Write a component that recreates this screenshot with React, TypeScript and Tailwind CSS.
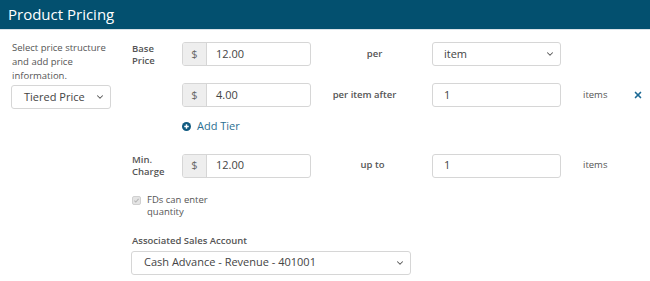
import { ChevronDown, X } from "lucide-react";

const font = { fontFamily: '"Open Sans", "Liberation Sans", sans-serif' };

function MoneyInput({ value }: { value: string }) {
  return (
    <div className="flex h-[24px] w-[129px] rounded-[3px] border border-[#d6d6d6] overflow-hidden">
      <div className="flex w-[24px] items-center justify-center border-r border-[#d6d6d6] bg-[#eeeeee] text-[11px] text-[#666]">
        $
      </div>
      <div className="flex flex-1 items-center pl-[9px] text-[11px] text-[#444]">{value}</div>
    </div>
  );
}

function TextBox({ value }: { value: string }) {
  return (
    <div className="flex h-[24px] w-[129px] items-center rounded-[3px] border border-[#d6d6d6] pl-[11px] text-[11px] text-[#444]">
      {value}
    </div>
  );
}

function SelectBox({ value, width, pad }: { value: string; width: string; pad: string }) {
  return (
    <div
      className={`flex h-[24px] items-center justify-between rounded-[3px] border border-[#d6d6d6] pr-[5px] text-[11px] text-[#444] ${width} ${pad}`}
    >
      <span>{value}</span>
      <ChevronDown className="h-[10px] w-[10px] text-[#555]" strokeWidth={2.5} />
    </div>
  );
}

export default function App() {
  return (
    <div className="h-[281px] w-[650px] bg-white" style={font}>
      {/* Header */}
      <div className="flex h-[30px] items-center border-b border-[#d9e3e8] bg-[#03506f] pl-[8px] text-[15px] text-white">
        Product Pricing
      </div>

      <div className="flex">
        {/* Left column */}
        <div className="w-[132px] pl-[11px] pt-[11px]">
          <p className="w-[100px] pl-[1px] text-[9.5px] leading-[14px] text-[#555]">
            Select price structure and add price information.
          </p>
          <div className="mt-[2px]">
            <SelectBox value="Tiered Price" width="w-[100px]" pad="pl-[12px]" />
          </div>
        </div>

        {/* Main form */}
        <div className="flex flex-col pt-[12px]">
          {/* Base price */}
          <div className="flex h-[24px] items-center">
            <div className="w-[50px] self-start pt-[1px] text-[9.5px] font-semibold leading-[12px] text-[#555]">
              Base
              <br />
              Price
            </div>
            <MoneyInput value="12.00" />
            <div className="w-[121px] pl-[6px] text-center text-[9.5px] font-semibold text-[#555]">per</div>
            <SelectBox value="item" width="w-[129px]" pad="pl-[11px]" />
          </div>

          {/* Tier row */}
          <div className="mt-[17px] flex h-[24px] items-center">
            <div className="w-[50px]" />
            <MoneyInput value="4.00" />
            <div className="w-[121px] pr-[14px] text-center text-[9.5px] font-semibold text-[#555]">per item after</div>
            <TextBox value="1" />
            <div className="w-[72px] pl-[22px] text-[9.5px] text-[#555]">items</div>
            <X className="h-[10px] w-[10px] text-[#1d6a95]" strokeWidth={4} />
          </div>

          {/* Add tier */}
          <div className="mt-[11px] flex items-center gap-[6px] pl-[50px]">
            <svg viewBox="0 0 16 16" className="h-[9px] w-[9px]">
              <circle cx="8" cy="8" r="8" fill="#0f5a80" />
              <path d="M8 4v8M4 8h8" stroke="white" strokeWidth="2.6" />
            </svg>
            <span className="text-[11px] text-[#2c6f92]">Add Tier</span>
          </div>

          {/* Min charge */}
          <div className="mt-[19px] flex h-[24px] items-center">
            <div className="w-[50px] text-[9.5px] font-semibold leading-[12px] text-[#555]">
              Min.
              <br />
              Charge
            </div>
            <MoneyInput value="12.00" />
            <div className="w-[121px] pl-[2px] text-center text-[9.5px] font-semibold text-[#555]">up to</div>
            <TextBox value="1" />
            <div className="pl-[22px] text-[9.5px] text-[#555]">items</div>
          </div>

          {/* Checkbox */}
          <div className="mt-[16px] flex items-start gap-[6px]">
            <div className="mt-[2px] flex h-[9px] w-[9px] items-center justify-center rounded-[2px] border border-[#d0d0d0] bg-[#e4e4e4]">
              <svg viewBox="0 0 10 10" className="h-[7px] w-[7px]">
                <path d="M2 5.2l2 2 4-4.5" fill="none" stroke="#b5b5b5" strokeWidth="1.5" />
              </svg>
            </div>
            <div className="w-[70px] text-[9.5px] leading-[12px] text-[#555]">FDs can enter quantity</div>
          </div>

          {/* Sales account */}
          <div className="mt-[17px] text-[9.5px] font-semibold leading-[12px] text-[#555]">Associated Sales Account</div>
          <div className="ml-[-1px] mt-[4px]">
            <SelectBox value="Cash Advance - Revenue - 401001" width="w-[280px]" pad="pl-[12px]" />
          </div>
        </div>
      </div>
    </div>
  );
}
